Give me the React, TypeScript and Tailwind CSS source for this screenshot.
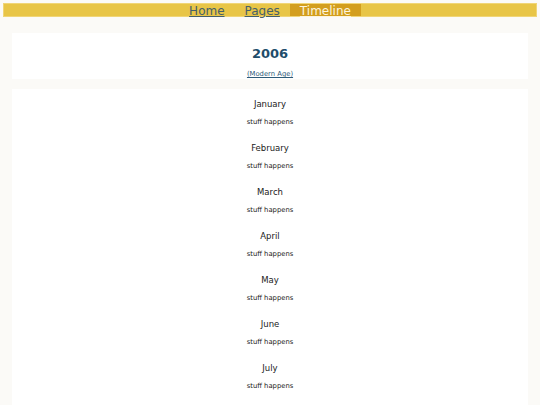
import { Component } from 'react'

const MONTHS = [
    'January',
    'February',
    'March',
    'April',
    'May',
    'June',
    'July',
    'August',
    'September',
    'October',
    'November',
    'December'
]

const NAV = [
    { label: 'Home', active: false },
    { label: 'Pages', active: false },
    { label: 'Timeline', active: true }
]

export default class App extends Component {
    render() {
        return (
            <div className="min-h-screen bg-[#fbfaf7] pt-[3px] font-['DejaVu_Sans',sans-serif]">
                <nav className="mx-[3px] flex h-[14px] justify-center border border-[#f0d577] bg-[#e8c547]">
                    {NAV.map((item) => (
                        <a
                            key={item.label}
                            href="#"
                            className={
                                item.active
                                    ? 'flex h-full items-center bg-[#d39e1e] px-[10px] pt-[1px] text-[12px] leading-none text-[#fdf4dc] underline'
                                    : 'flex h-full items-center px-[10px] pt-[1px] text-[12px] leading-none text-[#45606a] underline'
                            }
                        >
                            {item.label}
                        </a>
                    ))}
                </nav>

                <section className="mx-[12px] mt-[16px] flex h-[46px] flex-col items-center bg-white pt-[13px]">
                    <h1 className="text-[13px] font-bold leading-[16px] text-[#1e4d6b]">2006</h1>
                    <a href="#" className="mt-[7px] text-[6.8px] leading-[10px] text-[#2d5a78] underline">
                        (Modern Age)
                    </a>
                </section>

                <section className="mx-[12px] mt-[10px] flex flex-col items-center bg-white">
                    {MONTHS.map((month) => (
                        <div key={month} className="flex flex-col items-center pt-[9px] pb-[6px]">
                            <h2 className="text-[8.5px] leading-[12px] text-[#1a1a1a]">{month}</h2>
                            <p className="mt-[7px] text-[6.8px] leading-[10px] text-[#1a1a1a]">stuff happens</p>
                        </div>
                    ))}
                </section>
            </div>
        )
    }
}
